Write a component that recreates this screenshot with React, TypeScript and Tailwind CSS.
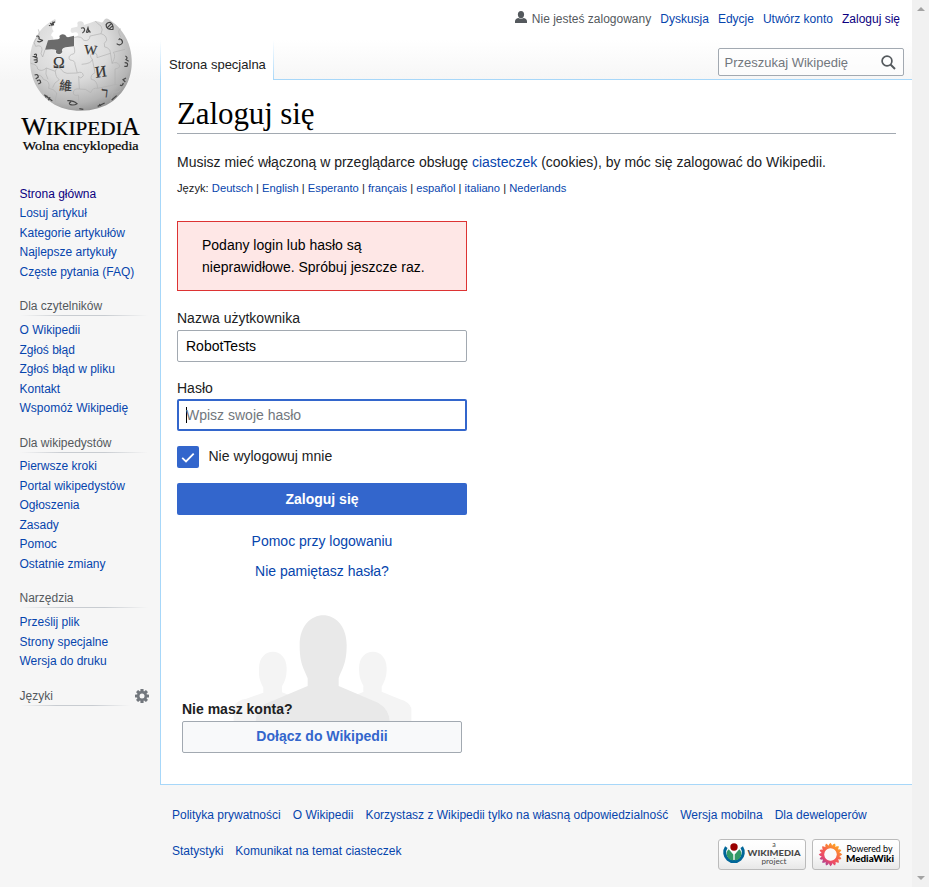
import React from "react";

const sans = "font-['Liberation_Sans',Arial,sans-serif]";

function Globe() {
  return (
    <svg width="160" height="160" viewBox="0 0 480 480" className="block">
      <defs>
        <radialGradient id="ball" cx="0.4" cy="0.3" r="0.76">
          <stop offset="0" stopColor="#f0f0f0" />
          <stop offset="0.5" stopColor="#dadada" />
          <stop offset="0.82" stopColor="#b4b4b4" />
          <stop offset="1" stopColor="#8c8c8c" />
        </radialGradient>
      </defs>
      <path
        d="M165 57 C130 74 100 110 92 155 C83 215 105 275 155 308 C205 342 290 340 340 302 C388 265 405 205 390 145 C381 108 358 78 326 58 Q317 52 311 62 Q309 71 298 65 L286 63 Q270 69 252 75 Q252 65 241 64 Q229 65 233 75 L232 80 L214 84 Q208 97 218 99 Q229 94 234 101 Q237 108 222 112 L222 139 L195 143 Q182 148 187 158 Q185 167 175 164 Q164 162 168 151 Q161 145 135 149 L144 121 L158 122 Q164 113 153 106 Q155 99 161 94 Q153 84 159 75 Q173 64 165 57Z"
        fill="url(#ball)"
      />
      <path
        d="M144 121 L174 118 Q182 116 178 108 Q185 99 196 105 Q198 113 207 111 L222 107 L222 139 L197 142 Q182 146 187 156 Q184 164 174 162 Q165 160 169 151 Q163 145 135 149Z"
        fill="#6b6b6b"
      />
      <g fill="none" stroke="#b0b0b0" strokeWidth="2">
        <path d="M115 88 Q123 107 107 117 Q98 128 107 139 Q126 133 126 149 Q119 162 128 171 L135 149" />
        <path d="M222 139 Q229 164 215 163 Q202 170 210 180 Q226 181 225 193 L232 219 Q248 212 250 227 Q241 239 236 229 L238 267 Q222 265 220 276 Q219 290 235 285 L238 326" />
        <path d="M92 190 Q113 194 113 207 Q125 217 139 204 L166 214 Q169 199 183 207 Q189 219 201 220 L231 219" />
        <path d="M222 112 Q246 107 251 121 Q269 125 270 108 L303 101 Q310 88 303 78 Q293 72 286 63" />
        <path d="M303 101 Q320 106 320 121 Q309 129 314 141 Q329 143 331 157 L336 190 Q351 184 357 194 Q365 203 345 207 L345 254 Q361 252 363 265 Q357 281 339 275 L332 305" />
        <path d="M245 193 Q275 191 277 178 Q265 165 279 159 Q293 157 291 173 L331 160 M336 190 Q350 167 340 157 L375 148" />
        <path d="M103 226 Q125 222 130 238 Q152 243 146 265 Q161 266 170 279 L165 309" />
        <path d="M139 204 Q134 223 144 238 M166 214 Q167 233 178 239 Q161 248 158 263" />
        <path d="M238 267 Q258 264 272 278 Q278 262 293 265 L345 254 M363 112 Q349 91 363 86" />
        <path d="M277 178 L285 218 Q270 225 274 238 Q292 240 293 265" />
      </g>
      <g fill="#343434" stroke="#343434" strokeWidth="0.6" fontFamily="Liberation Serif, serif">
        <text x="159" y="205" fontSize="47">Ω</text>
        <text x="252" y="162" fontSize="41" transform="rotate(4 252 162)">W</text>
        <text x="287" y="233" fontSize="48" transform="rotate(-8 287 233)">И</text>
        <text x="177" y="270" fontSize="38" fontFamily="Noto Sans CJK TC, sans-serif" transform="rotate(4 177 270)">維</text>
        <text x="302" y="290" fontSize="42" transform="rotate(7 302 290)">ר</text>
      </g>
      <g fill="none" stroke="#464646" strokeWidth="3.6">
        <path d="M243 85 Q253 80 254 90 Q252 97 247 99 M259 97 L264 83 Q269 99 259 97 M267 91 L271 98" />
        <path d="M318 73 Q318 91 339 88 Q341 73 330 67 Q317 68 319 79 M321 84 L334 71 M326 88 L339 76" />
        <path d="M361 117 Q369 121 367 129 Q359 139 350 131 M360 115 L356 120" />
        <path d="M109 109 Q119 105 117 117 L129 122 M112 124 Q120 128 127 121" />
        <path d="M102 164 Q112 159 109 169 L102 170 L113 175 M101 180 L111 179 Q114 189 104 187" />
        <path d="M104 225 Q114 220 115 231 L107 237 M111 243 Q121 235 122 248 L115 252" />
        <path d="M376 168 Q385 172 378 179 L386 184 M374 188 Q387 188 381 199 L373 199" />
        <path d="M378 234 L369 239 L376 246 M370 249 Q367 260 360 255" />
        <path d="M202 302 Q220 301 231 311 Q223 317 211 314 Q204 310 213 305" />
        <path d="M133 284 L157 303 M142 287 L136 292 M150 292 L145 301" />
        <path d="M147 77 L165 65 M151 69 L157 78 M158 65 L161 76" />
        <path d="M293 319 L314 309 M298 312 L302 318 M350 287 L335 300 M238 326 L250 328" />
      </g>
      <g fill="#000" stroke="#000" strokeWidth="0.7" fontFamily="Liberation Serif, serif">
        <text x="64" y="406" fontSize="76" textLength="76" lengthAdjust="spacingAndGlyphs">W</text>
        <text x="138" y="406" fontSize="57" textLength="230" lengthAdjust="spacingAndGlyphs">IKIPEDI</text>
        <text x="366" y="406" fontSize="78" textLength="53" lengthAdjust="spacingAndGlyphs">A</text>
        <text x="68" y="449" fontSize="40" textLength="348" lengthAdjust="spacingAndGlyphs">Wolna encyklopedia</text>
      </g>
    </svg>
  );
}

const groups = [
  { title: "Dla czytelników", pad: "pt-[5px]", links: ["O Wikipedii", "Zgłoś błąd", "Zgłoś błąd w pliku", "Kontakt", "Wspomóż Wikipedię"] },
  { title: "Dla wikipedystów", pad: "pt-[4.5px]", links: ["Pierwsze kroki", "Portal wikipedystów", "Ogłoszenia", "Zasady", "Pomoc", "Ostatnie zmiany"] },
  { title: "Narzędzia", pad: "pt-[5px]", links: ["Prześlij plik", "Strony specjalne", "Wersja do druku"] },
];

function Rule({ width }: { width: string }) {
  return <div className={`h-px ${width} bg-[linear-gradient(to_right,rgba(200,204,209,0)_0%,#c8ccd1_33%,#c8ccd1_66%,rgba(200,204,209,0)_100%)]`} />;
}

function NavLinks({ links, first }: { links: string[]; first?: boolean }) {
  return (
    <ul className="text-[12px] leading-[19.5px] text-[#0645ad]">
      {links.map((l, i) => (
        <li key={l} className={first && i === 0 ? "text-[#0b0080]" : ""}>{l}</li>
      ))}
    </ul>
  );
}

function Sidebar() {
  return (
    <aside className="w-[160px] shrink-0">
      <Globe />
      <nav className="pl-[19.5px] pt-[24.5px]">
        <NavLinks first links={["Strona główna", "Losuj artykuł", "Kategorie artykułów", "Najlepsze artykuły", "Częste pytania (FAQ)"]} />
        {groups.map((g) => (
          <section key={g.title} className="mt-[17px]">
            <h3 className="h-[16px] text-[12px] leading-[15px] text-[#54595d]">{g.title}</h3>
            <Rule width="w-[128px]" />
            <div className={g.pad}><NavLinks links={g.links} /></div>
          </section>
        ))}
        <section className="mt-[16px] flex justify-between pr-[11px]">
          <div>
            <h3 className="h-[17px] text-[12px] leading-[17px] text-[#54595d]">Języki</h3>
            <Rule width="w-[110px]" />
          </div>
          <svg width="14" height="14" viewBox="0 0 14 14" className="mt-px">
            <g fill="#72777d">
              {[0, 45, 90, 135].map((a) => (
                <rect key={a} x="5.4" y="0" width="3.2" height="14" rx="0.6" transform={`rotate(${a} 7 7)`} />
              ))}
              <circle cx="7" cy="7" r="5.1" />
            </g>
            <circle cx="7" cy="7" r="2.5" fill="#f6f6f6" />
          </svg>
        </section>
      </nav>
    </aside>
  );
}

function Header() {
  return (
    <header className="h-[80px]">
      <div className="flex h-[40px] items-start justify-end pr-[12px] pt-[11px] text-[12px] leading-[16px] text-[#0645ad]">
        <svg width="12" height="12" viewBox="0 0 12 12" className="mr-[5px]" fill="#54595d">
          <ellipse cx="6" cy="3.6" rx="3.1" ry="3.6" />
          <path d="M0 12V10.3Q0 8 3.2 7Q6 8.6 8.8 7Q12 8 12 10.3V12Z" />
        </svg>
        <span className="text-[#54595d]">Nie jesteś zalogowany</span>
        <span className="ml-[9px]">Dyskusja</span>
        <span className="ml-[9px]">Edycje</span>
        <span className="ml-[9px]">Utwórz konto</span>
        <span className="ml-[9px] text-[#0b0080]">Zaloguj się</span>
      </div>
      <div className="flex h-[40px]">
        <div className="w-px bg-linear-to-b from-white to-[#a7d7f9]" />
        <div className="w-[112px] bg-white pl-[8px] pt-[16px] text-[13px] leading-[18px] text-[#202122]">Strona specjalna</div>
        <div className="w-px bg-linear-to-b from-white to-[#a7d7f9]" />
        <div className="flex flex-1 justify-end border-b border-[#a7d7f9] pr-[8px] pt-[8px]">
          <div className="flex h-[28px] w-[186px] items-center justify-between rounded-[2px] border border-[#a2a9b1] bg-white/50 pl-[5.5px] pr-[7px] text-[13px] leading-[18px] text-[#72777d]">
            <span className="pt-px">Przeszukaj Wikipedię</span>
            <svg width="15" height="15" viewBox="0 0 15 15" fill="none" stroke="#54595d">
              <circle cx="6" cy="6" r="4.9" strokeWidth="1.7" />
              <path d="M9.5 9.5L14 14" strokeWidth="2" />
            </svg>
          </div>
        </div>
      </div>
    </header>
  );
}

function LoginForm() {
  return (
    <form className="flex w-[290px] flex-col text-[14px] text-[#202122]">
      <div className="h-[70px] border border-[#dd3333] bg-[#fee7e6] pl-[24px] pt-[12px] leading-[22px] text-black">
        Podany login lub hasło są<br />nieprawidłowe. Spróbuj jeszcze raz.
      </div>
      <div className="mt-[17px] h-[22px] leading-[20px]">Nazwa użytkownika</div>
      <div className="h-[32px] rounded-[2px] border border-[#a2a9b1] bg-white pl-[8px] leading-[30px] text-black">RobotTests</div>
      <div className="mt-[16px] h-[21px] leading-[20px]">Hasło</div>
      <div className="flex h-[32px] items-center rounded-[2px] border-2 border-[#3366cc] bg-white pl-[7px] text-[#72777d]">
        <span className="-mr-px h-[16px] w-px bg-black" />
        <span>Wpisz swoje hasło</span>
      </div>
      <div className="mt-[15px] flex h-[22px]">
        <span className="flex size-[22px] items-center justify-center rounded-[2px] bg-[#3366cc]">
          <svg width="14" height="12" viewBox="0 0 14 12" fill="none" stroke="white" strokeWidth="1.8"><path d="M1.2 6.9L5 10.5L12.7 2.6" /></svg>
        </span>
        <span className="ml-[9.5px] leading-[20px]">Nie wylogowuj mnie</span>
      </div>
      <div className="mt-[15px] h-[32px] rounded-[2px] bg-[#3366cc] text-center font-bold leading-[32px] text-white">Zaloguj się</div>
      <div className="mt-[16px] text-center leading-[20px] text-[#0645ad]">Pomoc przy logowaniu</div>
      <div className="mt-[10px] text-center leading-[20px] text-[#0645ad]">Nie pamiętasz hasła?</div>
      <div className="relative mt-[33px] h-[140px] px-[5px]">
        <svg width="180" height="107" viewBox="0 0 540 321" className="absolute left-[55px] top-px">
          <g fill="#f4f4f4">
            <path d="M5 320V280Q12 254 43 251L94 233V218C79 191 81 177 81 160C81 94 164 94 164 160C164 184 160 198 150 214V232L270 280V320Z" />
            <path d="M538 320V280Q532 261 504 253L449 230V215C463 190 464 177 464 160C464 94 381 94 381 160C381 184 386 198 394 212V231L270 280V320Z" />
          </g>
          <path d="M71 320Q71 286 99 267L227 213V190C218 164 203 152 203 91C203 -29 344 -29 344 91C344 148 329 164 320 190V213L438 263Q473 284 473 320Z" fill="#e9e9e9" />
        </svg>
        <div className="relative flex h-full flex-col pt-[85px]">
          <div className="h-[22px] shrink-0 font-bold leading-[20px]">Nie masz konta?</div>
          <div className="h-[32px] shrink-0 rounded-[2px] border border-[#a2a9b1] bg-[#f8f9fa] text-center font-bold leading-[29px] text-[#3366cc]">Dołącz do Wikipedii</div>
        </div>
      </div>
    </form>
  );
}

const languages = ["Deutsch", "English", "Esperanto", "français", "español", "italiano", "Nederlands"];

function Content() {
  return (
    <main className="h-[705px] border-b border-l border-[#a7d7f9] bg-white px-[16px] text-[#202122]">
      <h1 className="h-[54px] border-b border-[#a2a9b1] pt-[15px] font-['Liberation_Serif',serif] text-[31px] leading-[37px] tracking-[-0.1px] text-black">Zaloguj się</h1>
      <p className="mt-[18px] text-[14px] leading-[20px]">
        Musisz mieć włączoną w przeglądarce obsługę <span className="text-[#0645ad]">ciasteczek</span> (cookies), by móc się zalogować do Wikipedii.
      </p>
      <p className="mb-[25px] mt-[8px] text-[11.2px] leading-[16px]">
        Język: {languages.map((l, i) => (
          <React.Fragment key={l}>{i > 0 && " | "}<span className="text-[#0645ad]">{l}</span></React.Fragment>
        ))}
      </p>
      <LoginForm />
    </main>
  );
}

function WikimediaBadge() {
  return (
    <svg width="88" height="31" viewBox="0 0 88 31">
      <defs><linearGradient id="badge" x2="0" y2="1"><stop stopColor="#fff" /><stop offset="0.5" stopColor="#fafafa" /><stop offset="1" stopColor="#e7e7e7" /></linearGradient></defs>
      <rect x="0.5" y="0.5" width="87" height="30" rx="2.5" fill="url(#badge)" stroke="#bbb" />
      <path d="M8.3 8.1A9.3 9.3 0 1 0 23.7 8.1" fill="none" stroke="#069" strokeWidth="3" />
      <path d="M10.7 10.2A6.5 6.5 0 0 0 15.3 21.4V15.4Z M21.3 10.2A6.5 6.5 0 0 1 16.7 21.4V15.4Z" fill="#396" />
      <circle cx="16" cy="8" r="3.7" fill="#900" />
      <g textAnchor="middle" fill="#494949">
        <text x="56" y="8" fontSize="7" fontFamily="Lato, sans-serif">a</text>
        <text x="56" y="17" fontSize="8" fontWeight="900" textLength="53" lengthAdjust="spacingAndGlyphs" fontFamily="Lato, sans-serif">WIKIMEDIA</text>
        <text x="56" y="25" fontSize="7.7" textLength="25" lengthAdjust="spacingAndGlyphs" fontFamily="Lato, sans-serif">project</text>
      </g>
    </svg>
  );
}

function MediaWikiBadge() {
  const petals = Array.from({ length: 16 }, (_, i) => i * 22.5);
  return (
    <svg width="88" height="31" viewBox="0 0 88 31">
      <defs><linearGradient id="flower" gradientUnits="userSpaceOnUse" x1="25" y1="6" x2="11" y2="26"><stop stopColor="#ffa51f" /><stop offset="0.45" stopColor="#f4604f" /><stop offset="0.7" stopColor="#ec4a69" /><stop offset="1" stopColor="#9c3f9b" /></linearGradient></defs>
      <rect x="0.5" y="0.5" width="87" height="30" rx="2.5" fill="url(#badge)" stroke="#bbb" />
      <path d={petals.map((a) => {
        const point = (r: number, d: number) => `${18.5 + r * Math.cos((a + d) * Math.PI / 180)} ${15.5 + r * Math.sin((a + d) * Math.PI / 180)}`;
        return `M${point(6, -11)} L${point(10.2, -9)} L${point(11.8, 0)} L${point(10.2, 7)} L${point(6, 13)}Z`;
      }).join(" ")} fill="url(#flower)" />
      <circle cx="18.5" cy="15.5" r="7.8" fill="none" stroke="url(#flower)" strokeWidth="3.4" />
      <circle cx="18.5" cy="15.5" r="6.2" fill="#fafafa" />
      <g fill="#000" fontFamily="Lato, sans-serif" fontSize="8.6">
        <text x="34.5" y="13" textLength="46" lengthAdjust="spacingAndGlyphs">Powered by</text>
        <text x="34" y="22.5" fontWeight="900" textLength="48" lengthAdjust="spacingAndGlyphs">MediaWiki</text>
      </g>
    </svg>
  );
}

function Footer() {
  return (
    <footer className="pl-[12px] pt-[22px] text-[12px] leading-[16px] text-[#0645ad]">
      <div className="flex gap-[12px]">
        {["Polityka prywatności", "O Wikipedii", "Korzystasz z Wikipedii tylko na własną odpowiedzialność", "Wersja mobilna", "Dla deweloperów"].map((t) => (
          <span key={t} className="whitespace-nowrap">{t}</span>
        ))}
      </div>
      <div className="mt-[16px] flex gap-[12px] pr-[12px]">
        <span className="mt-[4px]">Statystyki</span>
        <span className="mt-[4px]">Komunikat na temat ciasteczek</span>
        <div className="ml-auto flex gap-[6px]"><WikimediaBadge /><MediaWikiBadge /></div>
      </div>
    </footer>
  );
}

export default function App() {
  return (
    <div className={`flex h-[887px] w-[929px] overflow-hidden bg-[#f6f6f6] ${sans}`}>
      <div className="flex w-[912px] bg-[linear-gradient(to_bottom,#fff_0,#fff_40px,#f6f6f6_80px)]">
        <Sidebar />
        <div className="min-w-0 flex-1">
          <Header />
          <Content />
          <Footer />
        </div>
      </div>
      <div className="flex w-[17px] flex-col items-center justify-between bg-[#f1f1f1] pb-[7px] pt-[7px]">
        <svg width="8" height="4" viewBox="0 0 8 4"><path d="M0 4L4 0L8 4Z" fill="#a3a3a3" /></svg>
        <svg width="8" height="4" viewBox="0 0 8 4"><path d="M0 0L4 4L8 0Z" fill="#a3a3a3" /></svg>
      </div>
    </div>
  );
}
